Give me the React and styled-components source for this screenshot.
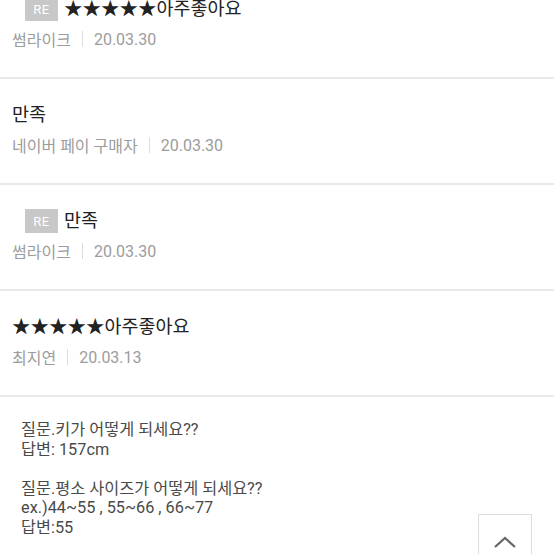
import styled, { createGlobalStyle } from "styled-components"

const GlobalStyle = createGlobalStyle`
  html, body {
    margin: 0;
    padding: 0;
    background: #fff;
    overflow: hidden;
  }
  body {
    font-family: Roboto, "Noto Sans CJK KR", sans-serif;
    color: #222;
  }
`

const Page = styled.div`
  width: 554px;
  height: 554px;
  overflow: hidden;
  position: relative;
`

const List = styled.ul`
  list-style: none;
  margin: -27px 0 0;
  padding: 0;
`

const Review = styled.li`
  height: 104px;
  box-sizing: content-box;
  padding-left: 12px;
  border-bottom: 2px solid #e9e9e9;
`

const TitleRow = styled.div`
  display: flex;
  align-items: center;
  padding-top: 24px;
  padding-left: ${(p) => (p.$reply ? "13px" : "0")};
  height: 24px;
  box-sizing: content-box;
`

const Badge = styled.span`
  display: inline-flex;
  align-items: center;
  justify-content: center;
  width: 33px;
  height: 24px;
  margin-right: 6px;
  background: #c8c8c8;
  color: #fff;
  font-size: 13px;
  letter-spacing: 0.5px;
`

const Title = styled.span`
  font-size: 18.5px;
  line-height: 24px;
  color: #222;
`

const Meta = styled.div`
  display: flex;
  align-items: center;
  margin-top: 8px;
  height: 20px;
  font-size: 16px;
  color: #9c9c9c;
`

const Divider = styled.span`
  width: 1px;
  height: 16px;
  background: #ddd;
  margin: 0 11px;
`

const Content = styled.div`
  padding: 23px 21px 0;
  font-size: 16.3px;
  line-height: 19.5px;
  color: #4a4a4a;
  white-space: pre-line;
`

const TopButton = styled.button`
  position: absolute;
  left: 478px;
  top: 514px;
  width: 54px;
  height: 54px;
  padding: 0;
  border: 1px solid #ddd;
  background: #fff;
  display: flex;
  justify-content: center;
  align-items: flex-start;
  padding-top: 20px;
`

const reviews = [
  { reply: true, title: "★★★★★아주좋아요", author: "썸라이크", date: "20.03.30" },
  { title: "만족", author: "네이버 페이 구매자", date: "20.03.30" },
  { reply: true, title: "만족", author: "썸라이크", date: "20.03.30" },
  { title: "★★★★★아주좋아요", author: "최지연", date: "20.03.13" },
]

const text = `질문.키가 어떻게 되세요??
답변: 157cm

질문.평소 사이즈가 어떻게 되세요??
ex.)44~55 , 55~66 , 66~77
답변:55`

const App = () => {
  return (
    <Page>
      <GlobalStyle />
      <List>
        {reviews.map((r, i) => (
          <Review key={i}>
            <TitleRow $reply={r.reply}>
              {r.reply && <Badge>RE</Badge>}
              <Title>{r.title}</Title>
            </TitleRow>
            <Meta>
              {r.author}
              <Divider />
              {r.date}
            </Meta>
          </Review>
        ))}
      </List>
      <Content>{text}</Content>
      <TopButton aria-label="top">
        <svg width="24" height="14" viewBox="0 0 24 14">
          <path d="M2 12 L12 3 L22 12" fill="none" stroke="#666" strokeWidth="2.2" />
        </svg>
      </TopButton>
    </Page>
  )
}

export default App
